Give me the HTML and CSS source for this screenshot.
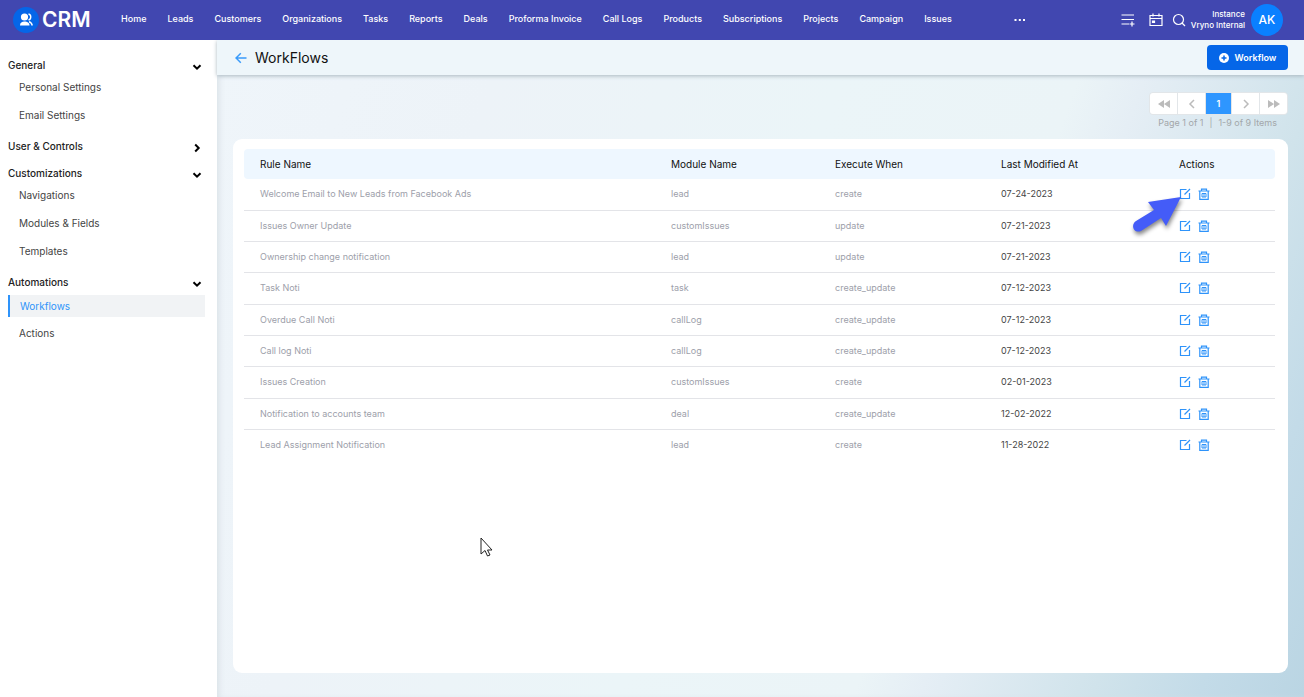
FILE: index.html
```html
<!DOCTYPE html>
<html lang="en">
<head>
<meta charset="utf-8">
<title>CRM - WorkFlows</title>
<link rel="stylesheet" href="styles.css">
</head>
<body>
<svg class="defs" aria-hidden="true">
  <symbol id="edit" viewBox="0 0 12 12"><path d="M7.500 1.500h-6v9h9V5" /><path d="m5.500 6.500 5.500-5.500" /></symbol>
  <symbol id="trash" viewBox="0 0 12 12"><path d="M.5 3h11M3.500 2.800V1.200h5v1.600M1.800 3v8.300h8.400V3" /><path class="fine" d="M4 5.500h4v3.500H4zM6 5.500v3.500" /></symbol>
  <symbol id="down" viewBox="0 0 10 10"><path d="M1.500 3.200 5 6.700l3.500-3.500" /></symbol>
  <symbol id="right" viewBox="0 0 10 10"><path d="M3.200 1.500 6.700 5 3.200 8.500" /></symbol>
</svg>
<header class="topbar">
  <a class="brand" href="#">
    <svg class="brand-mark" viewBox="0 0 26 26" aria-hidden="true">
      <circle cx="13" cy="13" r="13" fill="#0566e8"/>
      <circle cx="11.500" cy="10" r="3.600" fill="#fff"/>
      <path d="M7 18.500c0-3 2-4 4.500-4s5 1 5 4z" fill="#fff"/>
      <path d="M15.500 7c3 .6 3 5.200 0 6M16 14.700c2 .5 2.800 1.700 3.300 3.800" fill="none" stroke="#fff" stroke-width="1.400"/>
    </svg>
    <span>CRM</span>
  </a>
  <nav class="nav" aria-label="Modules">
    <a href="#">Home</a><a href="#">Leads</a><a href="#">Customers</a><a href="#">Organizations</a><a href="#">Tasks</a><a href="#">Reports</a><a href="#">Deals</a><a href="#">Proforma Invoice</a><a href="#">Call Logs</a><a href="#">Products</a><a href="#">Subscriptions</a><a href="#">Projects</a><a href="#">Campaign</a><a href="#">Issues</a>
  </nav>
  <button class="icon-button more" aria-label="More modules"><svg viewBox="0 0 12 4"><path d="M.5 1h2v2h-2zM4.800 1h2v2h-2zM9 1h2v2H9z" fill="#fff"/></svg></button>
  <div class="tools">
    <button class="icon-button" aria-label="Add to list"><svg class="line-icon" viewBox="0 0 14 14"><path d="M.5 2h12.500M.5 6.500h12.500M.5 11h7.500M11 8.500v5M8.500 11h5"/></svg></button>
    <button class="icon-button" aria-label="Calendar"><svg class="line-icon" viewBox="0 0 14 14"><path d="M1 2.500h12v10H1zM1 5.500h12M4 .5v3M10 .5v3"/><path d="M3.500 8h2v1.500h-2z" fill="#fff"/></svg></button>
    <button class="icon-button" aria-label="Search"><svg class="line-icon" viewBox="0 0 14 14"><circle cx="6.500" cy="6.500" r="5"/><path d="m10 10 3 3"/></svg></button>
  </div>
  <div class="instance"><span>Instance</span><span>Vryno Internal</span></div>
  <button class="avatar">AK</button>
</header>
<div class="layout">
  <aside class="sidebar">
    <section>
      <button class="group">General<svg><use href="#down"/></svg></button>
      <a href="#">Personal Settings</a>
      <a href="#">Email Settings</a>
    </section>
    <section>
      <button class="group">User &amp; Controls<svg><use href="#right"/></svg></button>
    </section>
    <section>
      <button class="group">Customizations<svg><use href="#down"/></svg></button>
      <a href="#">Navigations</a>
      <a href="#">Modules &amp; Fields</a>
      <a href="#">Templates</a>
    </section>
    <section>
      <button class="group">Automations<svg><use href="#down"/></svg></button>
      <a class="active" href="#" aria-current="page">Workflows</a>
      <a href="#">Actions</a>
    </section>
  </aside>
  <main class="main">
    <div class="page-head">
      <a class="back" href="#" aria-label="Back"><svg viewBox="0 0 12 12"><path d="M11.500 6H1M5.800 1.200 1 6l4.800 4.800"/></svg></a>
      <h1>WorkFlows</h1>
      <button class="primary"><svg viewBox="0 0 10 10" aria-hidden="true"><circle cx="5" cy="5" r="5" fill="#fff"/><path d="M5 2.500v5M2.500 5h5" stroke="#0566e8" stroke-width="1.500"/></svg>Workflow</button>
    </div>
    <div class="content">
      <div class="paging">
        <nav class="pager" aria-label="Pages">
          <button aria-label="First page"><svg viewBox="0 0 12 12"><path class="solid" d="M6 2v8L0 6zM12 2v8L6 6z"/></svg></button>
          <button aria-label="Previous page"><svg viewBox="0 0 12 12"><path d="M8 2 4 6l4 4"/></svg></button>
          <button class="current" aria-current="page">1</button>
          <button aria-label="Next page"><svg viewBox="0 0 12 12"><path d="m4 2 4 4-4 4"/></svg></button>
          <button aria-label="Last page"><svg viewBox="0 0 12 12"><path class="solid" d="M0 2v8l6-4zM6 2v8l6-4z"/></svg></button>
        </nav>
        <p><span>Page 1 of 1</span><span>|</span><span>1-9 of 9 Items</span></p>
      </div>
      <div class="card">
        <table>
          <colgroup><col><col class="c-module"><col class="c-when"><col class="c-date"><col class="c-actions"></colgroup>
          <thead><tr><th>Rule Name</th><th>Module Name</th><th>Execute When</th><th>Last Modified At</th><th>Actions</th></tr></thead>
          <tbody id="rules"></tbody>
        </table>
      </div>
    </div>
  </main>
</div>
<svg class="pointer-arrow" viewBox="0 0 56 44" aria-hidden="true"><path d="m52 5-33 5 6 8L7 29c-6 4-2 13 5 10l20-13 5 8z"/></svg>
<svg class="cursor" viewBox="0 0 13 20" aria-hidden="true"><path d="M1 1v16l4-3.500L7.500 19l2.500-1-2.500-5H12z"/></svg>
<script src="app.js"></script>
</body>
</html>
```
FILE: styles.css
```css
* { box-sizing: border-box; }
body {
  margin: 0;
  min-height: 100vh;
  display: flex;
  flex-direction: column;
  font-family: Inter, "Open Sans", sans-serif;
  font-size: 9px;
  line-height: 14px;
  color: #111;
  background: #fff;
}
a { color: inherit; text-decoration: none; }
button { border: 0; padding: 0; background: none; font: inherit; color: inherit; cursor: pointer; }
svg { display: block; fill: none; }
.defs { display: none; }

.topbar { position: relative; z-index: 1; height: 40px; flex: none; display: flex; align-items: center; padding: 0 21px 0 13px; background: #4147b0; color: #fff; }
.brand { display: flex; align-items: center; gap: 3px; width: 108px; flex: none; font: 600 21px/26px Inter, sans-serif; }
.brand-mark { width: 26px; height: 26px; }
.nav { display: flex; gap: 21px; padding-bottom: 2px; font-weight: 500; white-space: nowrap; }
.icon-button svg { width: 14px; height: 14px; }
.more { margin: 0 auto 0 62px; }
.more svg { width: 12px; height: 4px; }
.tools { display: flex; gap: 9px; }
.tools button:first-child { margin-right: 5px; }
.line-icon { stroke: #fff; stroke-width: 1.2; }
.instance { display: flex; flex-direction: column; align-items: flex-end; margin: 0 6px 0 5px; font-size: 8px; line-height: 11px; font-weight: 500; white-space: nowrap; }
.avatar { width: 32px; height: 32px; border-radius: 50%; background: #0a80ff; font-size: 12px; font-weight: 500; }

.layout { flex: 1; display: flex; }
.sidebar { width: 217px; flex: none; padding: 16px 12px 0 8px; font-size: 10px; }
.sidebar section { display: flex; flex-direction: column; margin-bottom: 11px; }
.sidebar section:nth-child(2) { margin-bottom: 9px; }
.group { display: flex; justify-content: space-between; align-items: center; height: 18px; padding-right: 3px; font-weight: 500; color: #222; }
.group svg { width: 10px; height: 10px; margin-top: 3px; stroke: #000; stroke-width: 2; }
.sidebar a { height: 22px; margin-bottom: 6px; padding-left: 11px; line-height: 22px; color: #444; }
.group + a { margin-top: 2px; }
.sidebar a:last-child { margin-bottom: 0; }
.sidebar .active { margin: 4px 0 5px; border-left: 2px solid #2e93fa; background: #f1f3f5; color: #2e93fa; padding-left: 10px; }

.main { flex: 1; min-width: 0; display: flex; flex-direction: column; background: linear-gradient(110deg, #eff5fa 0%, #edf3f8 22%, #ebf5f8 48%, #ebf4f7 66%, #e5eef5 71%, #d0e3eb 84%, #c3dbe8 92%, #bad5e3 100%); box-shadow: inset 5px 0 6px -3px #d9e1e6; }
.page-head { height: 35px; flex: none; display: flex; align-items: center; padding: 0 16px 0 18px; background: #eef6fa; box-shadow: 0 1px 4px #a9b7c0; }
.back svg { width: 12px; height: 12px; stroke: #3a9bfa; stroke-width: 1.5; }
h1 { margin: 0 auto 0 8px; font-size: 14px; line-height: 20px; font-weight: 400; }
.primary { display: flex; align-items: center; justify-content: center; gap: 6px; width: 81px; height: 25px; border-radius: 4px; background: #0566e8; color: #fff; font-weight: 600; }
.primary svg { width: 10px; height: 10px; }
.content { flex: 1; display: flex; flex-direction: column; padding: 17px 16px 24px; }
.paging { height: 47px; display: flex; flex-direction: column; align-items: flex-end; }
.pager { display: flex; gap: 1px; border: 1px solid #e2e6e9; border-radius: 4px; background: #e2e6e9; overflow: hidden; }
.pager button { width: 27px; height: 21px; display: grid; place-items: center; background: #fff; }
.pager .current { width: 25px; background: #2e96ff; color: #fff; font-weight: 600; }
.pager svg { width: 12px; height: 12px; stroke: #bbb; stroke-width: 1.5; }
.pager .solid { fill: #bbb; stroke: none; }
.paging p { display: flex; gap: 6px; margin: 1px 11px 0 0; color: #a3a7aa; }
.card { flex: 1; padding: 10px 13px 10px 11px; border-radius: 9px; background: #fff; }
table { width: 100%; table-layout: fixed; border-collapse: separate; border-spacing: 0; }
.c-module { width: 164px; }
.c-when { width: 166px; }
.c-date { width: 178px; }
.c-actions { width: 112px; }
th, td { padding: 0 0 1px 16px; text-align: left; font-weight: 400; color: #9da0aa; white-space: nowrap; }
th { height: 30px; background: #eef7ff; color: #111; font-weight: 400; font-size: 10px; }
th:first-child { border-radius: 4px 0 0 4px; }
th:last-child { border-radius: 0 4px 4px 0; }
td { height: 31px; border-bottom: 1px solid #e3e4e8; }
tr:nth-child(3n + 1) td { height: 32px; }
tr:last-child td { border-bottom: 0; }
td:nth-child(4) { color: #444; }
.row-actions { display: flex; gap: 7px; }
.row-actions svg { width: 12px; height: 12px; stroke: #2e93fa; stroke-width: 1.2; }
.fine { stroke-width: 1; }
.pointer-arrow { position: absolute; z-index: 2; left: 1129px; top: 192px; width: 56px; height: 44px; fill: #445cf8; filter: drop-shadow(1px 3px 2px #0007); pointer-events: none; }
.cursor { position: absolute; z-index: 2; left: 480px; top: 537px; width: 13px; height: 20px; fill: #fff; stroke: #222; stroke-width: 1; pointer-events: none; }
```
FILE: app.js
```js
const rules = [
  ["Welcome Email to New Leads from Facebook Ads", "lead", "create", "07-24-2023"],
  ["Issues Owner Update", "customIssues", "update", "07-21-2023"],
  ["Ownership change notification", "lead", "update", "07-21-2023"],
  ["Task Noti", "task", "create_update", "07-12-2023"],
  ["Overdue Call Noti", "callLog", "create_update", "07-12-2023"],
  ["Call log Noti", "callLog", "create_update", "07-12-2023"],
  ["Issues Creation", "customIssues", "create", "02-01-2023"],
  ["Notification to accounts team", "deal", "create_update", "12-02-2022"],
  ["Lead Assignment Notification", "lead", "create", "11-28-2022"]
];
document.getElementById("rules").innerHTML = rules.map(row =>
  `<tr>${row.map(text => `<td>${text}</td>`).join("")}<td><div class="row-actions">
    <button aria-label="Edit ${row[0]}"><svg><use href="#edit"/></svg></button>
    <button aria-label="Delete ${row[0]}"><svg><use href="#trash"/></svg></button>
  </div></td></tr>`).join("");
```
